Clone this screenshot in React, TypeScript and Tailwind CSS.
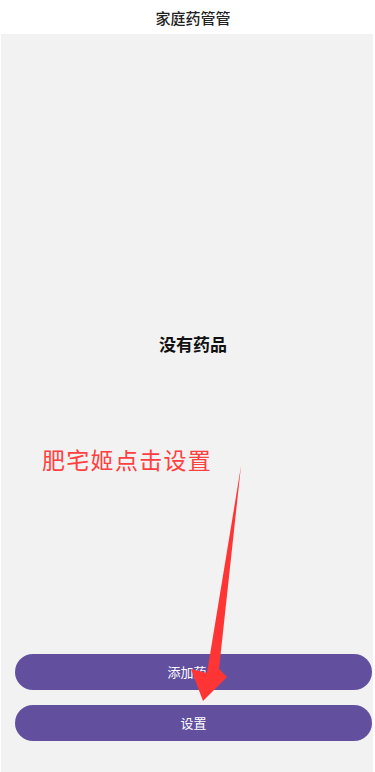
import React from 'react';

const font = { fontFamily: '"Noto Sans CJK SC", "Noto Sans", sans-serif' };

export default function App() {
  return (
    <div className="relative w-[375px] h-[772px] bg-white flex flex-col overflow-hidden" style={font}>
      <div className="h-[34px] flex items-center justify-center">
        <h1 className="text-[15px] font-medium text-[#222] leading-none ml-[11px]">家庭药管管</h1>
      </div>

      <div className="flex-1 ml-[1px] mr-[2px] bg-[#f2f2f2] flex flex-col">
        <div className="flex-1 flex items-center justify-center">
          <p className="text-[17px] font-bold text-[#111] ml-[12px]">没有药品</p>
        </div>
        <div className="flex flex-col gap-[15px] ml-[14px] mr-[1px] pb-[31px]">
          <button className="h-[36px] rounded-full bg-[#62509e] text-white text-[13px]">添加药品</button>
          <button className="h-[36px] rounded-full bg-[#62509e] text-white text-[13px]">设置</button>
        </div>
      </div>

      {/* annotation */}
      <div className="absolute left-[42px] top-[448px] text-[23px] text-[#ff4040] leading-none tracking-[1.3px]">
        肥宅姬点击设置
      </div>
      <svg className="absolute left-0 top-0 pointer-events-none" width="375" height="772">
        <polygon
          points="241,466 219,669 227,677 203,701 191,669 207,673"
          fill="#ff3535"
        />
      </svg>
    </div>
  );
}
